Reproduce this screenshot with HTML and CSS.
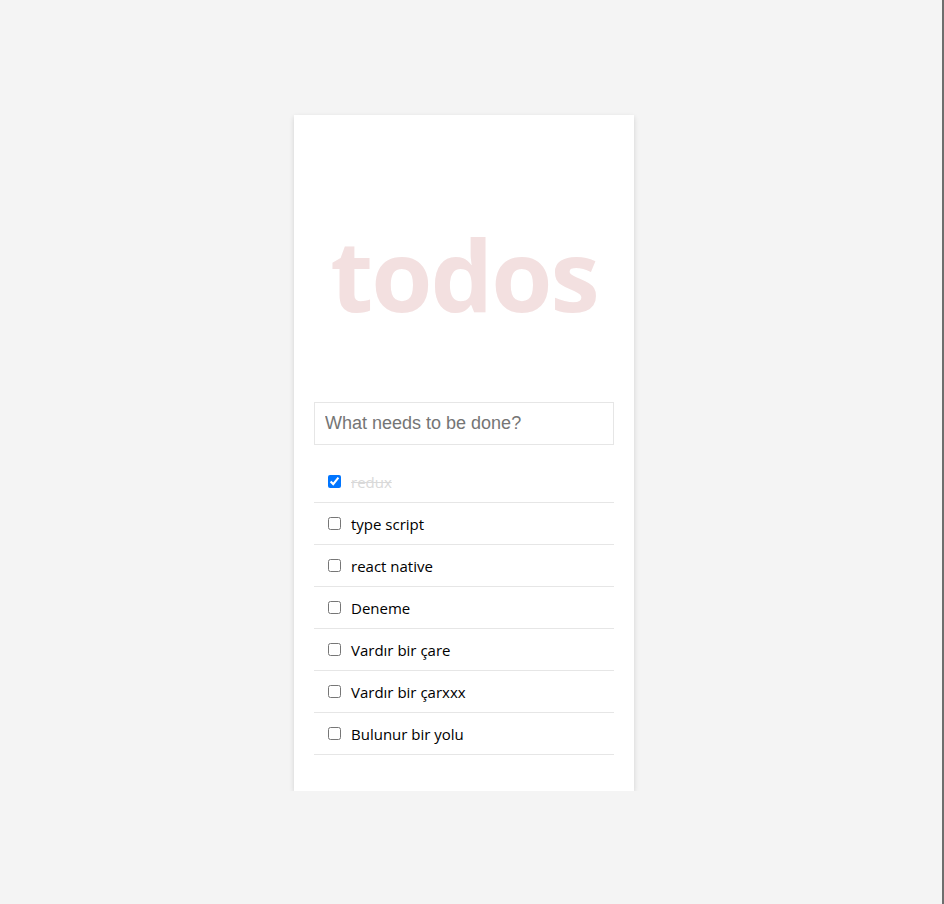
FILE: index.html
```html
<!DOCTYPE html>
<html lang="tr">
<head>
<meta charset="utf-8">
<title>todos</title>
<link rel="stylesheet" href="styles.css">
</head>
<body>
<div class="page">
  <section class="card">
    <h1 class="title">todos</h1>
    <input class="new-todo" type="text" placeholder="What needs to be done?">
    <ul class="todo-list">
      <li class="todo done"><label><input type="checkbox" checked><span>redux</span></label></li>
      <li class="todo"><label><input type="checkbox"><span>type script</span></label></li>
      <li class="todo"><label><input type="checkbox"><span>react native</span></label></li>
      <li class="todo"><label><input type="checkbox"><span>Deneme</span></label></li>
      <li class="todo"><label><input type="checkbox"><span>Vardır bir çare</span></label></li>
      <li class="todo"><label><input type="checkbox"><span>Vardır bir çarxxx</span></label></li>
      <li class="todo"><label><input type="checkbox"><span>Bulunur bir yolu</span></label></li>
    </ul>
  </section>
</div>
</body>
</html>
```

FILE: styles.css
```css
html {
  background: #f4f4f4;
  height: 100%;
  border-right: 2px solid #6e6e6e;
  box-sizing: border-box;
}
body {
  margin: 0;
  font-family: "Open Sans", "Noto Sans", sans-serif;
}
.page {
  display: flex;
  justify-content: center;
  padding: 115px 14px 0 0;
}
.card {
  width: 340px;
  box-sizing: border-box;
  background: #fff;
  padding: 20px 20px 36px;
  box-shadow: 0 2px 5px rgba(0, 0, 0, 0.14);
}
.title {
  margin: 0 0 60px;
  padding-top: 71px;
  text-align: center;
  font-size: 99px;
  line-height: 136px;
  font-weight: 700;
  color: rgb(243, 224, 224);
  letter-spacing: -2px;
}
.new-todo {
  display: block;
  width: 100%;
  box-sizing: border-box;
  height: 43px;
  padding: 0 10px;
  border: 1px solid #e6e6e6;
  font-family: "Liberation Sans", Arial, sans-serif;
  font-size: 18px;
  outline: none;
}
.new-todo::placeholder {
  color: #757575;
}
.todo-list {
  list-style: none;
  margin: 16px 0 0;
  padding: 0;
}
.todo {
  height: 41px;
  border-bottom: 1px solid #e6e6e6;
  display: flex;
  align-items: center;
  padding-left: 10px;
}
.todo label {
  display: flex;
  align-items: center;
  gap: 7px;
  font-size: 15px;
  color: #000;
}
.todo input {
  margin: 3px 3px 3px 4px;
  width: 13px;
  height: 13px;
}
.todo.done span {
  color: #d9d9d9;
  text-decoration: line-through;
}
```
